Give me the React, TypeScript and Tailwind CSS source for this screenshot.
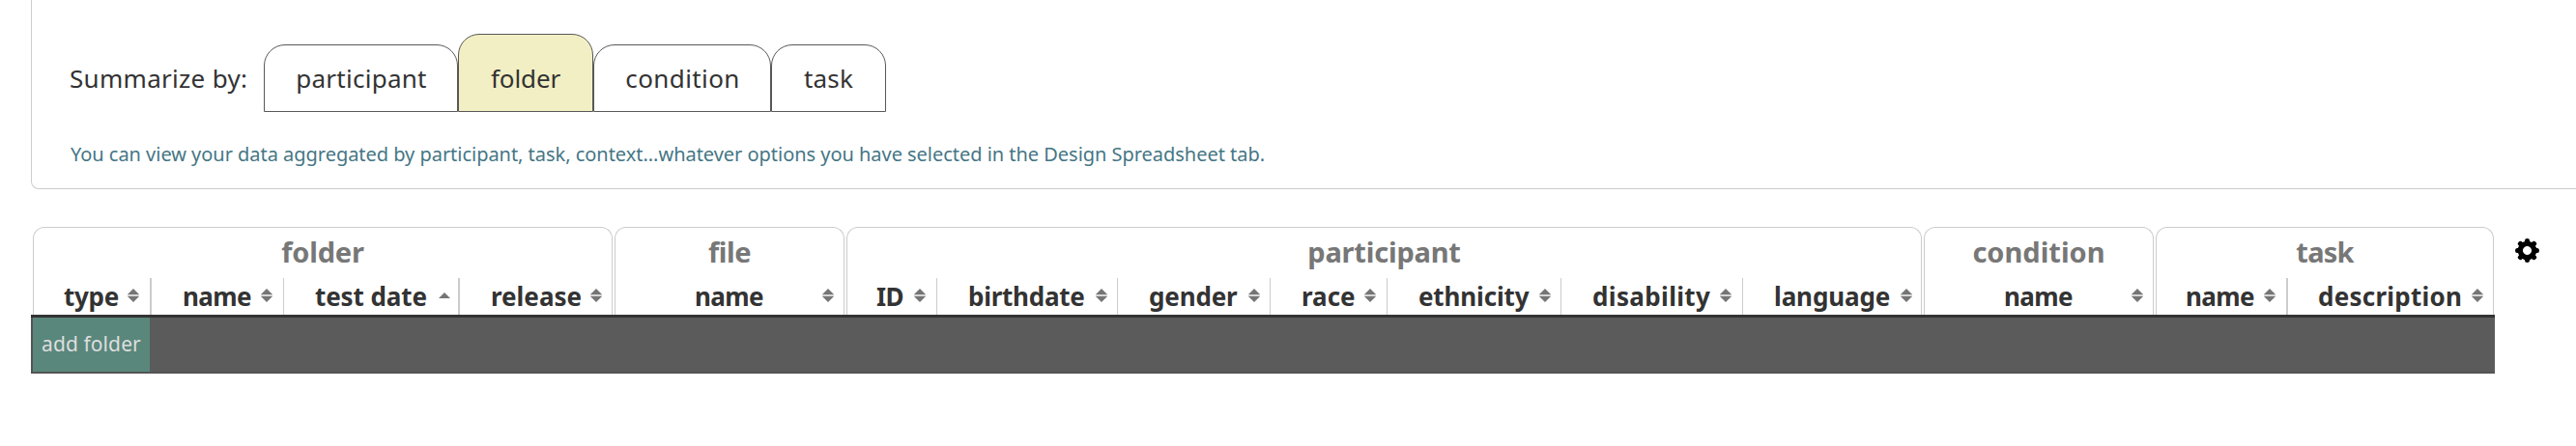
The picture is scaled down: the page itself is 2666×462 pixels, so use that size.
type Sort = "both" | "asc";

interface Column {
  label: string;
  cell: string;
  text: string;
  icon: string;
  sort?: Sort;
}

interface Group {
  title: string;
  width: string;
  tracking: string;
  columns: Column[];
}

const groups: Group[] = [
  {
    title: "folder",
    width: "w-[600px]",
    tracking: "tracking-[-0.2px]",
    columns: [
      { label: "type", cell: "w-[122px] border-r-2 pl-[31px]", text: "tracking-[-0.3px]", icon: "mr-[11px]" },
      { label: "name", cell: "w-[137px] border-r pl-[32px]", text: "tracking-[-0.6px]", icon: "mr-[11px]" },
      { label: "test date", cell: "w-[182px] border-r-2 pl-[32px]", text: "tracking-[-0.1px]", icon: "mr-[8px]", sort: "asc" },
      { label: "release", cell: "w-[157px] pl-[32px]", text: "tracking-normal", icon: "mr-[10px]" },
    ],
  },
  {
    title: "file",
    width: "w-[238px]",
    tracking: "tracking-[-0.4px]",
    columns: [{ label: "name", cell: "w-[236px] pl-[82px]", text: "tracking-[-0.6px]", icon: "mr-[10px]" }],
  },
  {
    title: "participant",
    width: "w-[1113px]",
    tracking: "tracking-[-0.2px]",
    columns: [
      { label: "ID", cell: "w-[93px] border-r pl-[30px]", text: "tracking-[-0.6px]", icon: "mr-[11px]" },
      { label: "birthdate", cell: "w-[187px] border-r pl-[32px]", text: "tracking-[-0.25px]", icon: "mr-[10px]" },
      { label: "gender", cell: "w-[158px] border-r pl-[32px]", text: "tracking-[-0.15px]", icon: "mr-[10px]" },
      { label: "race", cell: "w-[121px] border-r pl-[32px]", text: "tracking-normal", icon: "mr-[11px]" },
      { label: "ethnicity", cell: "w-[180px] border-r pl-[32px]", text: "tracking-[-0.15px]", icon: "mr-[10px]" },
      { label: "disability", cell: "w-[188px] border-r pl-[32px]", text: "tracking-[0.35px]", icon: "mr-[11px]" },
      { label: "language", cell: "w-[184px] pl-[32px]", text: "tracking-[-0.1px]", icon: "mr-[9px]" },
    ],
  },
  {
    title: "condition",
    width: "w-[238px]",
    tracking: "tracking-normal",
    columns: [{ label: "name", cell: "w-[236px] pl-[82px]", text: "tracking-[-0.6px]", icon: "mr-[10px]" }],
  },
  {
    title: "task",
    width: "w-[350px]",
    tracking: "tracking-[-0.8px]",
    columns: [
      { label: "name", cell: "w-[136px] border-r-2 pl-[30px]", text: "tracking-[-0.6px]", icon: "mr-[11px]" },
      { label: "description", cell: "w-[212px] pl-[31px]", text: "tracking-[0.25px]", icon: "mr-[10px]" },
    ],
  },
];

const tabs = [
  { label: "participant", box: "w-[201px] h-[70px] pl-px", text: "tracking-[0.25px]" },
  { label: "folder", box: "w-[140px] h-[81px] bg-[#f2efc4] pt-[11px]", text: "tracking-[-0.1px]" },
  { label: "condition", box: "w-[184px] h-[70px] pl-px", text: "tracking-[0.4px]" },
  { label: "task", box: "w-[119px] h-[70px]", text: "tracking-[0.2px]" },
];

function SortIcon({ sort = "both", className }: { sort?: Sort; className: string }) {
  return (
    <svg className={`mt-[11px] ml-auto h-[14px] w-3 shrink-0 ${className}`} viewBox="0 0 12 14">
      {sort === "both" ? (
        <>
          <path d="M6 0L12 6H0Z" fill="#757575" />
          <path d="M0 6H12V8H0Z" fill="#d6d6d6" />
          <path d="M0 8H12L6 14Z" fill="#757575" />
        </>
      ) : (
        <path d="M6 4L12 10H0Z" fill="#757575" />
      )}
    </svg>
  );
}

const teeth = [0, 45, 90, 135];

function Gear() {
  return (
    <svg className="mt-3 ml-[22px] h-[25px] w-[25px]" viewBox="0 0 25 25">
      {teeth.map((angle) => (
        <path
          key={angle}
          transform={`rotate(${angle} 12.5 12.5)`}
          d="M10 2Q10 0 12.5 0Q15 0 15 2L15.6 8H9.4ZM10 23Q10 25 12.5 25Q15 25 15 23L15.6 17H9.4Z"
        />
      ))}
      <circle cx="12.5" cy="12.5" r="7.2" fill="none" stroke="#000" strokeWidth="5.2" />
    </svg>
  );
}

export default function App() {
  return (
    <div className="h-[462px] w-full overflow-hidden bg-white font-['Noto_Sans',sans-serif] text-[26px] text-[#333]">
      <section className="ml-8 h-[196px] w-[2700px] rounded-bl-[8px] border-b border-l border-[#ccc] pl-[39px]">
        <div className="flex h-[116px] items-end">
          <div className="w-[201px] leading-[70px] tracking-[0.3px] whitespace-nowrap">Summarize by:</div>
          {tabs.map((tab) => (
            <button
              key={tab.label}
              className={`flex items-center justify-center rounded-t-[22px] border border-[#585858] ${tab.box}`}
            >
              <span className={tab.text}>{tab.label}</span>
            </button>
          ))}
        </div>
        <p className="mt-[29px] pl-px text-[20px] leading-[30px] tracking-[-0.03px] whitespace-nowrap text-[#457685]">
          You can view your data aggregated by participant, task, context...whatever options you have selected in the
          Design Spreadsheet tab.
        </p>
      </section>

      <section className="mt-[39px] ml-8">
        <div className="flex items-start">
          <div className="flex gap-[2px] pl-[2px] font-bold">
            {groups.map((group) => (
              <div
                key={group.title}
                className={`h-[91px] shrink-0 rounded-t-[12px] border border-b-0 border-[#ccc] ${group.width}`}
              >
                <div className={`mb-[2px] h-[50px] text-center text-[29px] leading-[50px] text-[#777] ${group.tracking}`}>
                  {group.title}
                </div>
                <div className="flex h-[38px]">
                  {group.columns.map((column) => (
                    <div key={column.label} className={`flex shrink-0 border-[#ccc] whitespace-nowrap ${column.cell}`}>
                      <span className={`leading-[38px] ${column.text}`}>{column.label}</span>
                      <SortIcon sort={column.sort} className={column.icon} />
                    </div>
                  ))}
                </div>
              </div>
            ))}
          </div>
          <Gear />
        </div>
        <div className="h-[61px] w-[2550px] border-t-[3px] border-[#333] bg-[#545454]">
          <div className="flex h-14 bg-[#5b5b5b]">
            <button className="h-14 w-[123px] border-l-2 border-[#545454] bg-[#5a877c] pl-[9px] text-left text-[21px] tracking-[0.1px] text-[#dedede]">
              add folder
            </button>
          </div>
        </div>
      </section>
    </div>
  );
}
